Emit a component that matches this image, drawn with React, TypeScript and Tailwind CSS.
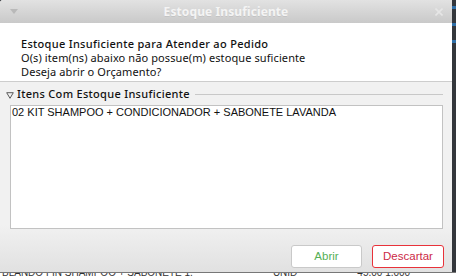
import React from 'react';

export default function App() {
  return (
    <div className="w-[456px] h-[276px] overflow-hidden bg-[#2c2f33] flex flex-col font-['Noto_Sans',sans-serif]">
      <div className="flex h-[272px]">
        {/* Dialog */}
        <div className="w-[452px] h-full flex flex-col bg-[#f1f1f1] rounded-tl-[3px] overflow-hidden">
          {/* Title bar */}
          <div className="relative h-[23px] shrink-0 bg-gradient-to-b from-[#e2e2e2] to-[#c9c9c9] flex items-center justify-center">
            <svg className="absolute left-[10px] top-[9px]" width="8" height="5" viewBox="0 0 8 5">
              <path d="M0 0 L8 0 L4 5 Z" fill="#b9b9b9" />
            </svg>
            <span className="text-[12px] font-bold text-[#f4f4f4] tracking-[0.1px] [text-shadow:0_1px_0_rgba(0,0,0,0.08)]">
              Estoque Insuficiente
            </span>
            <svg className="absolute right-[9px] top-[8px]" width="8" height="8" viewBox="0 0 8 8">
              <path d="M0.5 0.5 L7.5 7.5 M7.5 0.5 L0.5 7.5" stroke="#e6e6e6" strokeWidth="1.6" />
            </svg>
          </div>

          {/* Header */}
          <div className="h-[59px] shrink-0 bg-white border-b border-[#cdcdcd] pl-[21px] pt-[14px] text-[11px] leading-[14px] text-[#111] tracking-[0.1px]">
            <p className="font-medium tracking-[0.3px]">Estoque Insuficiente para Atender ao Pedido</p>
            <p>O(s) item(ns) abaixo não possue(m) estoque suficiente</p>
            <p>Deseja abrir o Orçamento?</p>
          </div>

          {/* Body */}
          <div className="flex-1 flex flex-col bg-gradient-to-b from-[#f1f1f1] from-[75%] to-[#e1e1e1]">
            <div className="flex items-center h-[21px] pl-[6px] pr-[9px] mt-[2px]">
              <svg width="8" height="7" viewBox="0 0 8 7" className="shrink-0 mt-[1px]">
                <path d="M0.7 0.7 L7.3 0.7 L4 6.3 Z" fill="none" stroke="#5a5a5a" strokeWidth="1" />
              </svg>
              <span className="ml-[3px] text-[11px] font-medium text-[#111] tracking-[0.3px]">Itens Com Estoque Insuficiente</span>
              <div className="flex-1 ml-[5px] h-px bg-[#c8c8c8]" />
            </div>
            <div className="ml-[10px] mr-[9px] h-[124px] bg-white border border-[#c2c2c2] px-[1px] font-['Liberation_Sans',Arial,sans-serif] text-[11px] leading-[13px] text-[#111]">
              02 KIT SHAMPOO + CONDICIONADOR + SABONETE LAVANDA
            </div>
            <div className="flex justify-end gap-[10px] pr-[8px] mt-[16px] font-['Liberation_Sans',Arial,sans-serif] text-[11.5px]">
              <button className="w-[71px] h-[23px] bg-white border border-[#c9c9c9] rounded-[3px] text-[#55b055]">
                Abrir
              </button>
              <button className="w-[72px] h-[23px] bg-white border border-[#e8323a] rounded-[3px] text-[#cc2a46]">
                Descartar
              </button>
            </div>
          </div>
        </div>
        {/* Edge of window behind */}
        <div className="flex-1 bg-[#34373c] flex flex-col gap-[14px] pt-[6px]">
          <div className="h-[3px] bg-[#2f6fa8]" />
          <div className="h-[3px] bg-[#2f6fa8]" />
          <div className="h-[3px] bg-[#2f6fa8]" />
        </div>
      </div>
      {/* Background content peeking below */}
      <div className="h-[4px] bg-white border-t border-[#777] overflow-hidden flex items-start text-[10px] leading-[10px] text-[#333] font-['Liberation_Sans',Arial,sans-serif]">
        <span className="-mt-[5px] ml-[2px]">BLANDO FIN SHAMPOO + SABONETE 1.</span>
        <span className="-mt-[5px] ml-[80px]">UNID</span>
        <span className="-mt-[5px] ml-[60px]">45,00 1,000</span>
      </div>
    </div>
  );
}
